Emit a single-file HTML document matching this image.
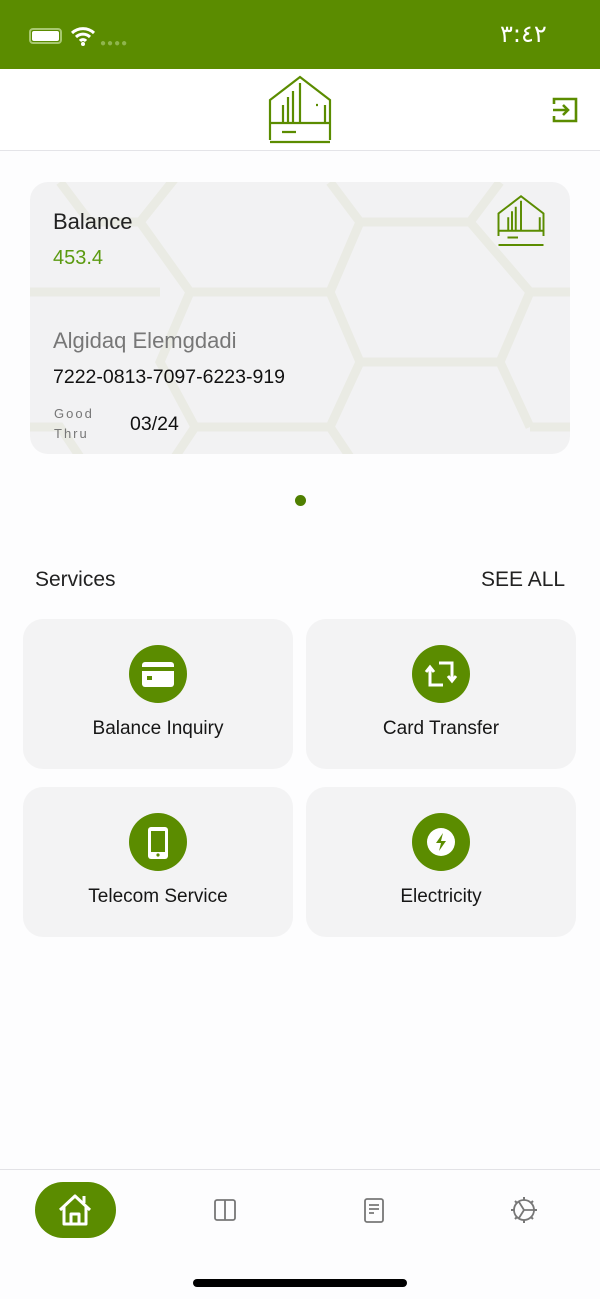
<!DOCTYPE html>
<html><head><meta charset="utf-8"><style>
*{margin:0;padding:0;box-sizing:border-box}
body{width:600px;height:1299px;background:#fdfdfe;font-family:"Liberation Sans",sans-serif;position:relative;overflow:hidden;color:#111}
.abs{position:absolute}
.status{left:0;top:0;width:600px;height:69px;background:#5b8c00}
.hdr{left:0;top:69px;width:600px;height:82px;border-bottom:1px solid #e4e4e8;background:#fff}
.card{left:30px;top:182px;width:540px;height:272px;border-radius:18px;background:#f2f2f3;overflow:hidden}
.tile{width:270px;height:150px;border-radius:20px;background:#f3f3f4}
.circ{position:absolute;left:106px;top:26px;width:58px;height:58px;border-radius:50%;background:#5b8c00}
.lbl{position:absolute;left:0;width:100%;top:99px;text-align:center;font-size:19px;color:#161616}
</style></head><body>
<div class="abs status">
<div class="abs" style="left:29px;top:28px;width:33px;height:16px;border:2px solid #a8c870;border-radius:4px"><div style="margin:1px;height:10px;background:#fff;border-radius:2px"></div></div>
<svg class="abs" style="left:70px;top:26px" width="26" height="20" viewBox="0 0 26 20"><path d="M2 7a16 16 0 0 1 22 0M6 11a10 10 0 0 1 14 0M10 15a4 4 0 0 1 6 0" stroke="#fff" stroke-width="3" fill="none"/><circle cx="13" cy="18" r="2" fill="#fff"/></svg>
<div class="abs" style="left:100px;top:38px;color:#8fb54d;font-size:10px;letter-spacing:1px">●●●●</div>
<div class="abs" style="left:500px;top:20px;color:#fff;font-size:24px;font-family:'DejaVu Sans',sans-serif">٣:٤٢</div>
</div>
<div class="abs hdr">
<svg class="abs" style="left:268px;top:6px" width="64" height="70" viewBox="0 0 64 70"><g stroke="#5b8c00" stroke-width="2.2" fill="none"><path d="M2 55V25L32 2L62 25V55"/><path d="M2 48h60M15 47V30M20 47V22M25 47V16M32 47V8M57 47V30M48 30h2M2 55V65M62 55V65M14 57h14M2 67h60"/></g></svg>
<svg class="abs" style="left:551px;top:27px" width="28" height="28" viewBox="0 0 28 28"><g stroke="#5b8c00" stroke-width="2.6" fill="none"><path d="M3 8V3h22v22H3v-5"/><path d="M2 14h15M12 9l5 5-5 5"/></g></svg>
</div>
<div class="abs card">
<svg class="abs" style="left:0;top:0" width="540" height="272" viewBox="0 0 540 272"><g stroke="#eaebe4" stroke-width="9" fill="none"><path d="M30 0L60 40H110L150 -10M110 40L160 110 130 180 165 245 135 290M160 110H300L330 40 300 0M330 40H440L470 0M440 40L500 110 470 180 500 245M300 110L330 180 300 245 330 290M330 180H470M300 245H160M0 110H130M500 110H540M500 245H540M0 245H30L60 290"/></g></svg>
<div class="abs" style="left:23px;top:27px;font-size:22px;color:#222">Balance</div>
<div class="abs" style="left:23px;top:65px;font-size:20px;color:#5b9a10">453.4</div>
<div class="abs" style="left:23px;top:146px;font-size:22px;color:#777">Algidaq Elemgdadi</div>
<div class="abs" style="left:23px;top:184px;font-size:19.5px;color:#111">7222-0813-7097-6223-919</div>
<div class="abs" style="left:24px;top:222px;font-size:13px;color:#777;letter-spacing:2px;line-height:20px">Good<br>Thru</div>
<div class="abs" style="left:100px;top:231px;font-size:19.5px;color:#111">03/24</div>
<svg class="abs" style="left:467px;top:12px" width="48" height="54" viewBox="0 0 64 70"><g stroke="#5b8c00" stroke-width="2.6" fill="none"><path d="M2 55V25L32 2L62 25V55"/><path d="M2 48h60M15 47V30M20 47V22M25 47V16M32 47V8M57 47V30M14 57h14M2 67h60"/></g></svg>
</div>
<div class="abs" style="left:295px;top:495px;width:11px;height:11px;border-radius:50%;background:#4f7f00"></div>
<div class="abs" style="left:35px;top:568px;font-size:21px;color:#222">Services</div>
<div class="abs" style="left:481px;top:568px;font-size:21px;color:#222">SEE ALL</div>

<div class="abs tile" style="left:23px;top:619px"><div class="circ"><svg width="58" height="58" viewBox="0 0 58 58"><rect x="13" y="17" width="32" height="25" rx="3" fill="#fff"/><rect x="13" y="22" width="32" height="4" fill="#5b8c00"/><rect x="18" y="31" width="5" height="4" fill="#5b8c00"/></svg></div><div class="lbl">Balance Inquiry</div></div>
<div class="abs tile" style="left:306px;top:619px"><div class="circ"><svg width="58" height="58" viewBox="0 0 58 58"><g stroke="#fff" stroke-width="3" fill="none"><path d="M18 24V40H31M14 27l4-5 4 5M40 34V18H27M36 31l4 5 4-5"/></g></svg></div><div class="lbl">Card Transfer</div></div>
<div class="abs tile" style="left:23px;top:787px"><div class="circ"><svg width="58" height="58" viewBox="0 0 58 58"><rect x="19" y="14" width="20" height="32" rx="3" fill="#fff"/><rect x="22" y="18" width="14" height="21" fill="#5b8c00"/><circle cx="29" cy="42" r="1.6" fill="#5b8c00"/></svg></div><div class="lbl">Telecom Service</div></div>
<div class="abs tile" style="left:306px;top:787px"><div class="circ"><svg width="58" height="58" viewBox="0 0 58 58"><circle cx="29" cy="29" r="14" fill="#fff"/><path d="M31 20l-7 10h5l-2 8 7-10h-5z" fill="#5b8c00"/></svg></div><div class="lbl">Electricity</div></div>

<div class="abs" style="left:0;top:1169px;width:600px;height:1px;background:#e2e2e6"></div>
<div class="abs" style="left:35px;top:1182px;width:81px;height:56px;border-radius:28px;background:#5b8c00">
<svg class="abs" style="left:22px;top:11px" width="36" height="34" viewBox="0 0 36 34"><g stroke="#fff" stroke-width="3" fill="none" stroke-linejoin="round"><path d="M3 17L18 3l15 14M7 14v17h22V14M14 31V21h8v10M27 10V3"/></g></svg></div>
<svg class="abs" style="left:213px;top:1198px" width="24" height="24" viewBox="0 0 24 24"><g stroke="#777" stroke-width="1.8" fill="none"><rect x="2" y="2" width="20" height="20" rx="2"/><path d="M12 2v20"/></g></svg>
<svg class="abs" style="left:363px;top:1197px" width="22" height="27" viewBox="0 0 22 27"><g stroke="#777" stroke-width="1.8" fill="none"><rect x="2" y="2" width="18" height="23" rx="2"/><path d="M6 8h10M6 12h10M6 16h5"/></g></svg>
<svg class="abs" style="left:510px;top:1196px" width="28" height="28" viewBox="0 0 28 28"><g stroke="#777" stroke-width="1.8" fill="none"><circle cx="14" cy="14" r="10"/><path d="M14 14L9 6M14 14L9 22M14 14h10"/><path d="M14 1v3M14 24v3M1 14h3M24 14h3M5 5l2 2M21 21l2 2M5 23l2-2M21 7l2-2" stroke-width="2"/></g></svg>
<div class="abs" style="left:193px;top:1279px;width:214px;height:8px;border-radius:4px;background:#000"></div>
</body></html>
